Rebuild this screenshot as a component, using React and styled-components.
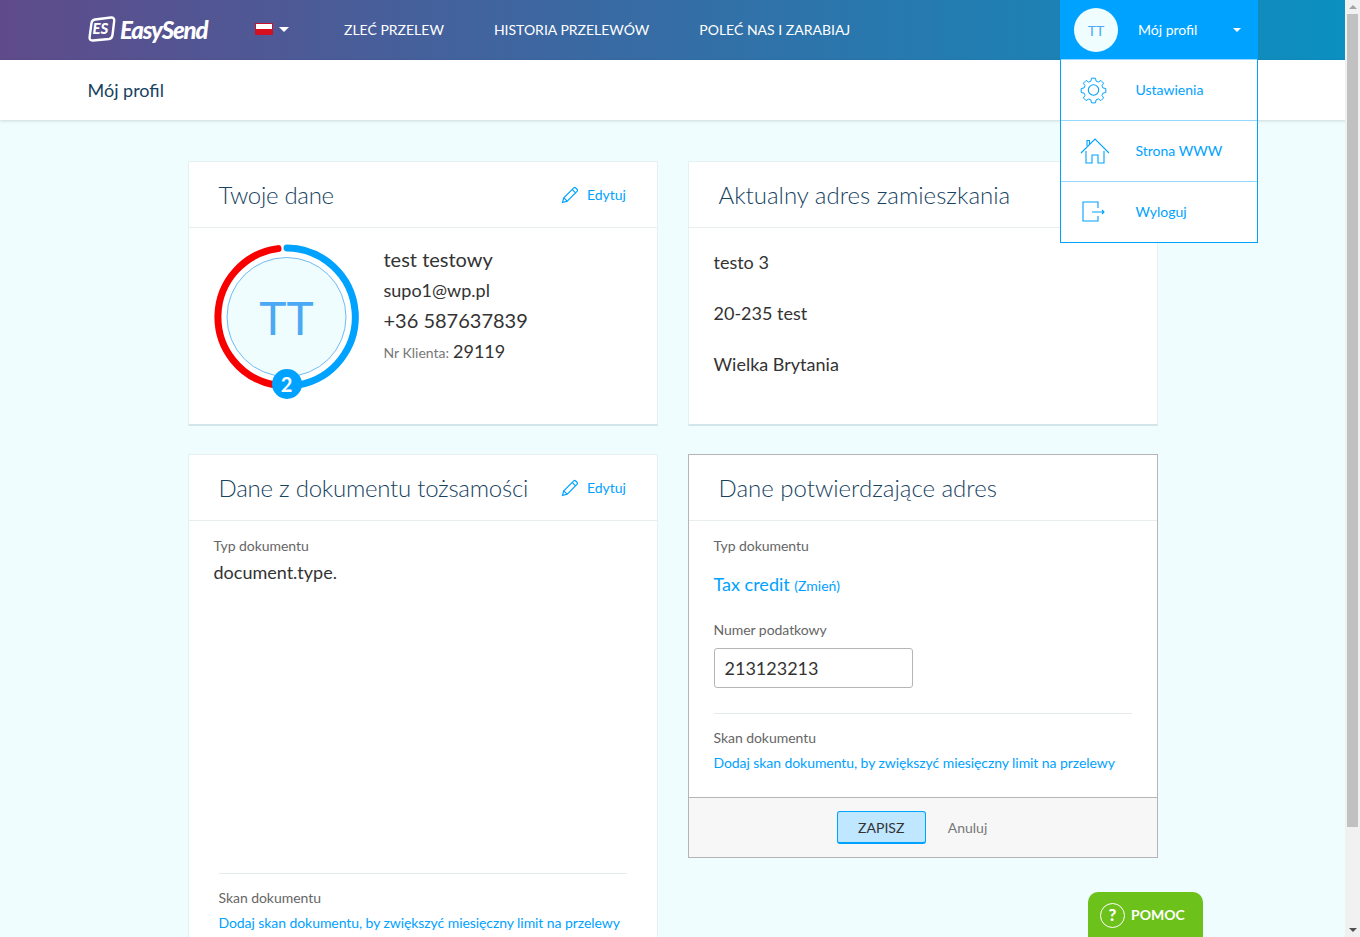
import React from "react";
import styled, { createGlobalStyle } from "styled-components";

const GlobalStyle = createGlobalStyle`
  body {
    margin: 0;
    background: #effdff;
    font-family: Lato, "Noto Sans", sans-serif;
    color: #333;
  }
`;

const Page = styled.div`
  position: relative;
  min-height: 1048px;
`;

const TopBar = styled.header`
  height: 60px;
  box-sizing: border-box;
  display: flex;
  align-items: center;
  padding: 0 0 2px 88px;
  background: linear-gradient(90deg, #5f4b8b 0, #0b90c0 1345px);
  color: #fff;
`;

const Logo = styled.div`
  display: flex;
  align-items: center;
  gap: 4px;
  width: 167px;
`;

const LogoText = styled.span`
  font-size: 24px;
  font-weight: 900;
  font-style: italic;
  letter-spacing: -1.2px;
`;

const LangPicker = styled.div`
  display: flex;
  align-items: center;
  gap: 6px;
  width: 89px;
`;

const Flag = styled.span`
  width: 18px;
  height: 12px;
  box-sizing: border-box;
  border: 1px solid #c9102c;
  background: linear-gradient(#fff 50%, #d6101f 50%);
`;

const Caret = styled.span`
  width: 0;
  height: 0;
  border-left: ${(p) => p.$size || 5}px solid transparent;
  border-right: ${(p) => p.$size || 5}px solid transparent;
  border-top: ${(p) => p.$size || 5}px solid #fff;
`;

const NavLink = styled.a`
  font-size: 14px;
  margin-right: 50px;
  color: #fff;
  text-transform: uppercase;
`;

const ProfileMenu = styled.div`
  position: absolute;
  top: 0;
  left: 1060px;
  width: 198px;
  z-index: 5;
`;

const ProfileHead = styled.div`
  height: 59px;
  display: flex;
  align-items: center;
  padding: 0 17px 0 14px;
  box-sizing: border-box;
  background: #00a2ff;
  color: #fff;
  font-size: 14px;
`;

const HeadAvatar = styled.div`
  width: 44px;
  height: 44px;
  margin: 1px 20px 0 0;
  border-radius: 50%;
  background: #effdff;
  color: #4aa8f5;
  display: flex;
  align-items: center;
  justify-content: center;
`;

const HeadName = styled.span`
  flex: 1;
`;

const MenuList = styled.div`
  background: #fff;
  border: 1px solid #00a2ff;
  border-top: 0;
`;

const MenuItem = styled.a`
  height: 60px;
  box-sizing: content-box;
  display: flex;
  align-items: center;
  padding-left: 19px;
  color: #00a2ff;
  font-size: 14px;
  border-top: 1px solid #96d8ff;

  span {
    margin-bottom: 2px;
  }

  svg {
    margin-right: 25.5px;
    flex: none;
  }
`;

const SubBar = styled.div`
  height: 60px;
  box-sizing: border-box;
  display: flex;
  align-items: center;
  padding: 0 0 1px 87.5px;
  background: #fff;
  box-shadow: 0 1px 3px rgba(0, 0, 0, 0.15);
  color: #17435f;
  font-size: 18px;
`;

const Grid = styled.main`
  width: 970px;
  margin: 41px 0 0 188px;
  display: grid;
  grid-template-columns: 470px 470px;
  grid-template-rows: 265px auto;
  column-gap: 30px;
  row-gap: 28px;
  align-items: start;
`;

const Card = styled.section`
  box-sizing: border-box;
  background: #fff;
  border: 1px solid ${(p) => (p.$active ? "#b5b5b5" : "#e5f0f3")};
  border-bottom: ${(p) => (p.$active ? "1px solid #b5b5b5" : "2px solid #d2e5ea")};
  height: ${(p) => p.$height || "auto"};
`;

const CardHead = styled.div`
  height: 66px;
  box-sizing: border-box;
  display: flex;
  align-items: center;
  justify-content: space-between;
  padding: 0 31px 0 29.5px;
  border-bottom: 1px solid #e8eeef;
`;

const CardTitle = styled.h2`
  margin: 0;
  font-size: 24px;
  font-weight: 300;
  color: #17435f;
  letter-spacing: ${(p) => p.$tracking || "0"};
`;

const EditLink = styled.a`
  display: flex;
  align-items: center;
  gap: 8px;
  color: #00a2ff;
  font-size: 14px;
`;

const ProfileBody = styled.div`
  display: flex;
  padding: 16px 24.5px 0;
`;

const RingBox = styled.div`
  position: relative;
  width: 146px;
  height: 156px;
  margin-right: 24px;
  flex: none;
`;

const Badge = styled.span`
  position: absolute;
  left: 58px;
  top: 125px;
  width: 30px;
  height: 30px;
  border-radius: 50%;
  background: #00a2ff;
  color: #fff;
  font-size: 20px;
  font-weight: 700;
  display: flex;
  align-items: center;
  justify-content: center;
`;

const InfoList = styled.div`
  display: flex;
  flex-direction: column;
`;

const InfoLine = styled.div`
  font-size: ${(p) => p.$size || "20px"};
  line-height: 30.6px;
  color: #333;
`;

const MutedLabel = styled.span`
  font-size: 14px;
  color: #777;
  margin-right: 4px;
`;

const AddressBody = styled.div`
  padding: 9px 24.5px 0;
`;

const AddressLine = styled.p`
  margin: 0;
  height: 51px;
  font-size: 18px;
  line-height: 51px;
  color: #333;
`;

const DocBody = styled.div`
  padding: 16px 24.5px 0;
`;

const FieldLabel = styled.div`
  margin-top: ${(p) => p.$top || "0"};
  font-size: 14px;
  line-height: 18px;
  color: #666;
  letter-spacing: -0.05px;
`;

const DocValue = styled.div`
  margin-top: 4px;
  font-size: 18px;
  line-height: 27px;
  color: #333;
`;

const DocKind = styled.div`
  margin-top: 16px;
  font-size: 18px;
  line-height: 27px;
  color: #00a2ff;

  small {
    font-size: 14px;
  }
`;

const Divider = styled.div`
  height: 1px;
  background: #e5eaea;
`;

const ScanBlock = styled.div`
  padding: ${(p) => p.$padding};
`;

const ScanLink = styled.a`
  display: block;
  margin-top: 7px;
  font-size: 14px;
  line-height: 18px;
  letter-spacing: -0.07px;
  color: #00a2ff;
  white-space: nowrap;
`;

const TextField = styled.input`
  display: block;
  width: 199px;
  height: 40px;
  box-sizing: border-box;
  margin-top: 9px;
  padding: 0 10px;
  border: 1px solid #b5b5b5;
  border-radius: 3px;
  font: 18px Lato, sans-serif;
  color: #333;
`;

const CardFoot = styled.div`
  height: 59px;
  display: flex;
  align-items: center;
  justify-content: center;
  gap: 22px;
  padding-right: 22px;
  background: #f7f7f7;
  border-top: 1px solid #b5b5b5;
`;

const SaveButton = styled.button`
  width: 89px;
  height: 33px;
  padding: 0;
  background: #bfe7ff;
  border: 1px solid #00a2ff;
  border-bottom-width: 2px;
  border-radius: 3px;
  color: #333;
  font: 14px Lato, sans-serif;
`;

const CancelLink = styled.a`
  color: #777;
  font-size: 14px;
`;

const HelpButton = styled.div`
  position: fixed;
  left: 1088px;
  bottom: 0;
  width: 115px;
  height: 45px;
  box-sizing: border-box;
  padding: 11px 0 0 12px;
  display: flex;
  align-items: flex-start;
  gap: 6px;
  background: #6cc11a;
  border-radius: 10px 10px 0 0;
  color: #fff;
  font-size: 14px;
  font-weight: 700;
  line-height: 24px;
`;

const HelpMark = styled.span`
  width: 25px;
  height: 25px;
  box-sizing: border-box;
  border: 1px solid #fff;
  border-radius: 50%;
  font-size: 17px;
  font-weight: 900;
  text-align: center;
  line-height: 22px;
`;

const ScrollRail = styled.div`
  position: fixed;
  top: 0;
  right: 0;
  bottom: 0;
  width: 15px;
  z-index: 10;
  display: flex;
  flex-direction: column;
  align-items: center;
  background: #f1f1f1;
`;

const ScrollArrow = styled.div`
  height: 14px;
  flex: none;
  display: flex;
  align-items: center;
  justify-content: center;

  &::before {
    content: "";
    border-left: 4px solid transparent;
    border-right: 4px solid transparent;
    ${(p) => (p.$down ? "border-top: 4px solid #505050;" : "border-bottom: 4px solid #a3a3a3;")}
  }
`;

const ScrollThumb = styled.div`
  width: 11px;
  height: 813px;
  background: #c1c1c1;
`;

const ScrollGap = styled.div`
  flex: 1;
`;

const LogoMark = () => (
  <svg width="28" height="26" viewBox="0 0 28 26" fill="none">
    <path
      d="M7 3.5 L23 1.5 Q26.5 1.2 26.2 5 L24.5 19 Q24 22.5 21 23 L5 24.5 Q1.2 24.8 1.6 21 L3.5 7 Q4 4 7 3.5 Z"
      stroke="#fff"
      strokeWidth="2.4"
    />
    <text x="4.5" y="18" fill="#fff" fontFamily="Lato" fontSize="15" fontWeight="900" fontStyle="italic">
      ES
    </text>
  </svg>
);

const PencilIcon = () => (
  <svg width="18" height="18" viewBox="0 0 18 18" fill="none" stroke="#00a2ff" strokeWidth="1.2">
    <path d="M1.5 16.5 L2.8 11.8 L12.8 1.8 Q13.6 1 14.5 1.8 L16.2 3.5 Q17 4.4 16.2 5.2 L6.2 15.2 Z" />
    <path d="M11.2 3.4 L14.6 6.8 M2.8 11.8 L6.2 15.2" />
  </svg>
);

const GearIcon = () => (
  <svg width="30" height="28" viewBox="0 0 30 28" fill="none" stroke="#00a2ff" strokeWidth="1.1">
    <circle cx="13.5" cy="14" r="5.2" />
    <path
      d="M11.8 2 h4.4 l.7 3.3 2.5 1 2.8-1.8 3 3-1.8 2.8 1 2.5 3.3.7 v4.4 l-3.3.7 -1 2.5 1.8 2.8 -3 3 -2.8-1.8 -2.5 1 -.7 3.3 h-4.4 l-.7-3.3 -2.5-1 -2.8 1.8 -3-3 1.8-2.8 -1-2.5 -3.3-.7 v-4.4 l3.3-.7 1-2.5 -1.8-2.8 3-3 2.8 1.8 2.5-1 z"
      transform="translate(0.9 0.4) scale(0.9)"
    />
  </svg>
);

const HomeIcon = () => (
  <svg width="30" height="26" viewBox="0 0 30 26" fill="none" stroke="#00a2ff" strokeWidth="1.1">
    <path d="M1 15 L15 1 L29 15" />
    <path d="M7 8 V2.5 H9.5 V6" />
    <path d="M6 13 V25 H12 V17 H18 V25 H24 V13" />
  </svg>
);

const ExitIcon = () => (
  <svg width="30" height="22" viewBox="-2 0 30 22" fill="none" stroke="#00a2ff" strokeWidth="1.1">
    <path d="M16 7 V1 H1 V20 H16 V15" />
    <path d="M10 11 H22 M20 9 L22 11 L20 13" />
  </svg>
);

const AvatarRing = () => (
  <svg width="146" height="146" viewBox="0 0 146 146" fill="none">
    <circle cx="72.5" cy="73" r="59.5" fill="#effdff" stroke="#4aa8f5" strokeWidth="0.8" />
    <path d="M73 4 A69 69 0 0 1 84 141" stroke="#00a2ff" strokeWidth="7" strokeLinecap="round" />
    <path d="M64 4.6 A69 69 0 0 0 60 140.8" stroke="#f80000" strokeWidth="7" strokeLinecap="round" />
    <text x="72.5" y="91" textAnchor="middle" fill="#4aa8f5" fontFamily="Lato" fontSize="46" fontWeight="400">
      TT
    </text>
  </svg>
);

const App = () => (
  <Page>
    <GlobalStyle />
    <TopBar>
      <Logo>
        <LogoMark />
        <LogoText>EasySend</LogoText>
      </Logo>
      <LangPicker>
        <Flag />
        <Caret />
      </LangPicker>
      <NavLink>Zleć przelew</NavLink>
      <NavLink>Historia przelewów</NavLink>
      <NavLink>Poleć nas i zarabiaj</NavLink>
    </TopBar>
    <SubBar>Mój profil</SubBar>

    <ProfileMenu>
      <ProfileHead>
        <HeadAvatar>TT</HeadAvatar>
        <HeadName>Mój profil</HeadName>
        <Caret $size={4} />
      </ProfileHead>
      <MenuList>
        <MenuItem>
          <GearIcon />
          <span>Ustawienia</span>
        </MenuItem>
        <MenuItem>
          <HomeIcon />
          <span>Strona WWW</span>
        </MenuItem>
        <MenuItem>
          <ExitIcon />
          <span>Wyloguj</span>
        </MenuItem>
      </MenuList>
    </ProfileMenu>

    <Grid>
      <Card $height="265px">
        <CardHead>
          <CardTitle $tracking="-0.3px">Twoje dane</CardTitle>
          <EditLink>
            <PencilIcon />
            Edytuj
          </EditLink>
        </CardHead>
        <ProfileBody>
          <RingBox>
            <AvatarRing />
            <Badge>2</Badge>
          </RingBox>
          <InfoList>
            <InfoLine>test testowy</InfoLine>
            <InfoLine $size="18px">supo1@wp.pl</InfoLine>
            <InfoLine>+36 587637839</InfoLine>
            <InfoLine $size="18px">
              <MutedLabel>Nr Klienta:</MutedLabel>29119
            </InfoLine>
          </InfoList>
        </ProfileBody>
      </Card>

      <Card $height="265px">
        <CardHead>
          <CardTitle>Aktualny adres zamieszkania</CardTitle>
        </CardHead>
        <AddressBody>
          <AddressLine>testo 3</AddressLine>
          <AddressLine>20-235 test</AddressLine>
          <AddressLine>Wielka Brytania</AddressLine>
        </AddressBody>
      </Card>

      <Card $height="520px">
        <CardHead>
          <CardTitle $tracking="-0.25px">Dane z dokumentu tożsamości</CardTitle>
          <EditLink>
            <PencilIcon />
            Edytuj
          </EditLink>
        </CardHead>
        <DocBody>
          <FieldLabel>Typ dokumentu</FieldLabel>
          <DocValue>document.type.</DocValue>
        </DocBody>
        <ScanBlock $padding="287px 30px 0 29.5px">
          <Divider />
          <FieldLabel $top="15px">Skan dokumentu</FieldLabel>
          <ScanLink>Dodaj skan dokumentu, by zwiększyć miesięczny limit na przelewy</ScanLink>
        </ScanBlock>
      </Card>

      <Card $active>
        <CardHead>
          <CardTitle>Dane potwierdzające adres</CardTitle>
        </CardHead>
        <DocBody>
          <FieldLabel>Typ dokumentu</FieldLabel>
          <DocKind>
            Tax credit <small>(Zmień)</small>
          </DocKind>
          <FieldLabel $top="22px">Numer podatkowy</FieldLabel>
          <TextField defaultValue="213123213" />
        </DocBody>
        <ScanBlock $padding="25px 25px 25px 24.5px">
          <Divider />
          <FieldLabel $top="15px">Skan dokumentu</FieldLabel>
          <ScanLink>Dodaj skan dokumentu, by zwiększyć miesięczny limit na przelewy</ScanLink>
        </ScanBlock>
        <CardFoot>
          <SaveButton>ZAPISZ</SaveButton>
          <CancelLink>Anuluj</CancelLink>
        </CardFoot>
      </Card>
    </Grid>

    <HelpButton>
      <HelpMark>?</HelpMark>
      POMOC
    </HelpButton>

    <ScrollRail>
      <ScrollArrow />
      <ScrollThumb />
      <ScrollGap />
      <ScrollArrow $down />
    </ScrollRail>
  </Page>
);

export default App;
